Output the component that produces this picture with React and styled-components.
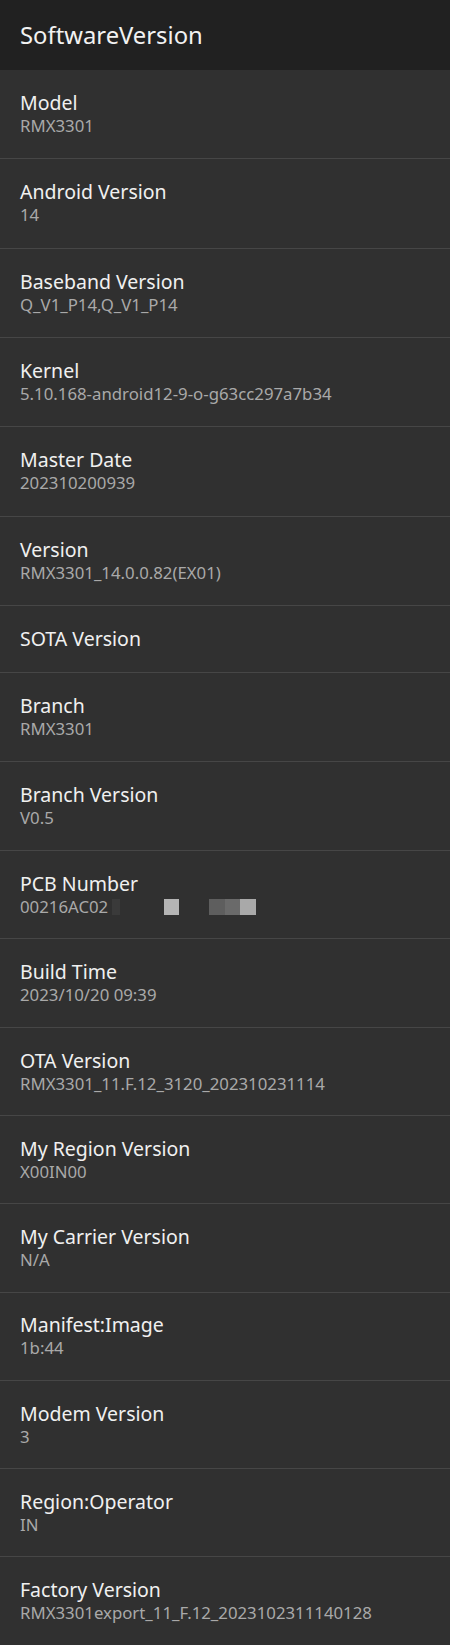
import React from "react"
import styled, { createGlobalStyle } from "styled-components"

const Global = createGlobalStyle`
  body {
    margin: 0;
    background: #303030;
    font-family: "Noto Sans", "Open Sans", sans-serif;
  }
`

const Page = styled.div`
  width: 450px;
  min-height: 1645px;
  background: #303030;
`

const Header = styled.header`
  height: 70px;
  background: #212121;
  display: flex;
  align-items: center;
  padding: 0 20px;
  box-sizing: border-box;
`

const Title = styled.h1`
  margin: 0;
  font-size: 23.8px;
  font-weight: 400;
  color: #f2f2f2;
`

const Row = styled.div`
  box-sizing: border-box;
  height: ${p => p.h}px;
  padding: 0 20px;
  display: flex;
  flex-direction: column;
  justify-content: center;
  border-bottom: 1px solid #464646;

  &:last-child {
    border-bottom: none;
  }
`

const Label = styled.div`
  font-size: 19.5px;
  line-height: 24px;
  color: #f0f0f0;
`

const Value = styled.div`
  font-size: 16.8px;
  line-height: 22px;
  color: #a9a9a9;
  display: flex;
  align-items: center;
`

const Redacted = styled.span`
  display: inline-flex;
  align-items: center;
  margin-left: 4px;
`

const Block = styled.span`
  display: inline-block;
  height: 16px;
  width: ${p => p.w}px;
  margin-left: ${p => p.gap || 0}px;
  background: ${p => p.c};
`

const items = [
  ["Model", "RMX3301", 89],
  ["Android Version", "14", 89.7],
  ["Baseband Version", "Q_V1_P14,Q_V1_P14", 89.3],
  ["Kernel", "5.10.168-android12-9-o-g63cc297a7b34", 89.3],
  ["Master Date", "202310200939", 89.4],
  ["Version", "RMX3301_14.0.0.82(EX01)", 89.3],
  ["SOTA Version", null, 67],
  ["Branch", "RMX3301", 89.5],
  ["Branch Version", "V0.5", 88.5],
  ["PCB Number", "pcb", 88.5],
  ["Build Time", "2023/10/20 09:39", 88.5],
  ["OTA Version", "RMX3301_11.F.12_3120_202310231114", 88.2],
  ["My Region Version", "X00IN00", 88.2],
  ["My Carrier Version", "N/A", 88.5],
  ["Manifest:Image", "1b:44", 88.2],
  ["Modem Version", "3", 88],
  ["Region:Operator", "IN", 88.4],
  ["Factory Version", "RMX3301export_11_F.12_2023102311140128", 88],
]

function PcbValue() {
  return (
    <Value>
      00216AC02
      <Redacted>
        <Block w={8} c="#3a3a3a" />
        <Block w={15} c="#b4b4b4" gap={44} />
        <Block w={16} c="#5e5e5e" gap={30} />
        <Block w={15} c="#6a6a6a" />
        <Block w={16} c="#a9a9a9" />
      </Redacted>
    </Value>
  )
}

export default function App() {
  return (
    <Page>
      <Global />
      <Header>
        <Title>SoftwareVersion</Title>
      </Header>
      {items.map(([label, value, h]) => (
        <Row key={label} h={h}>
          <Label>{label}</Label>
          {value === "pcb" ? <PcbValue /> : value && <Value>{value}</Value>}
        </Row>
      ))}
    </Page>
  )
}
